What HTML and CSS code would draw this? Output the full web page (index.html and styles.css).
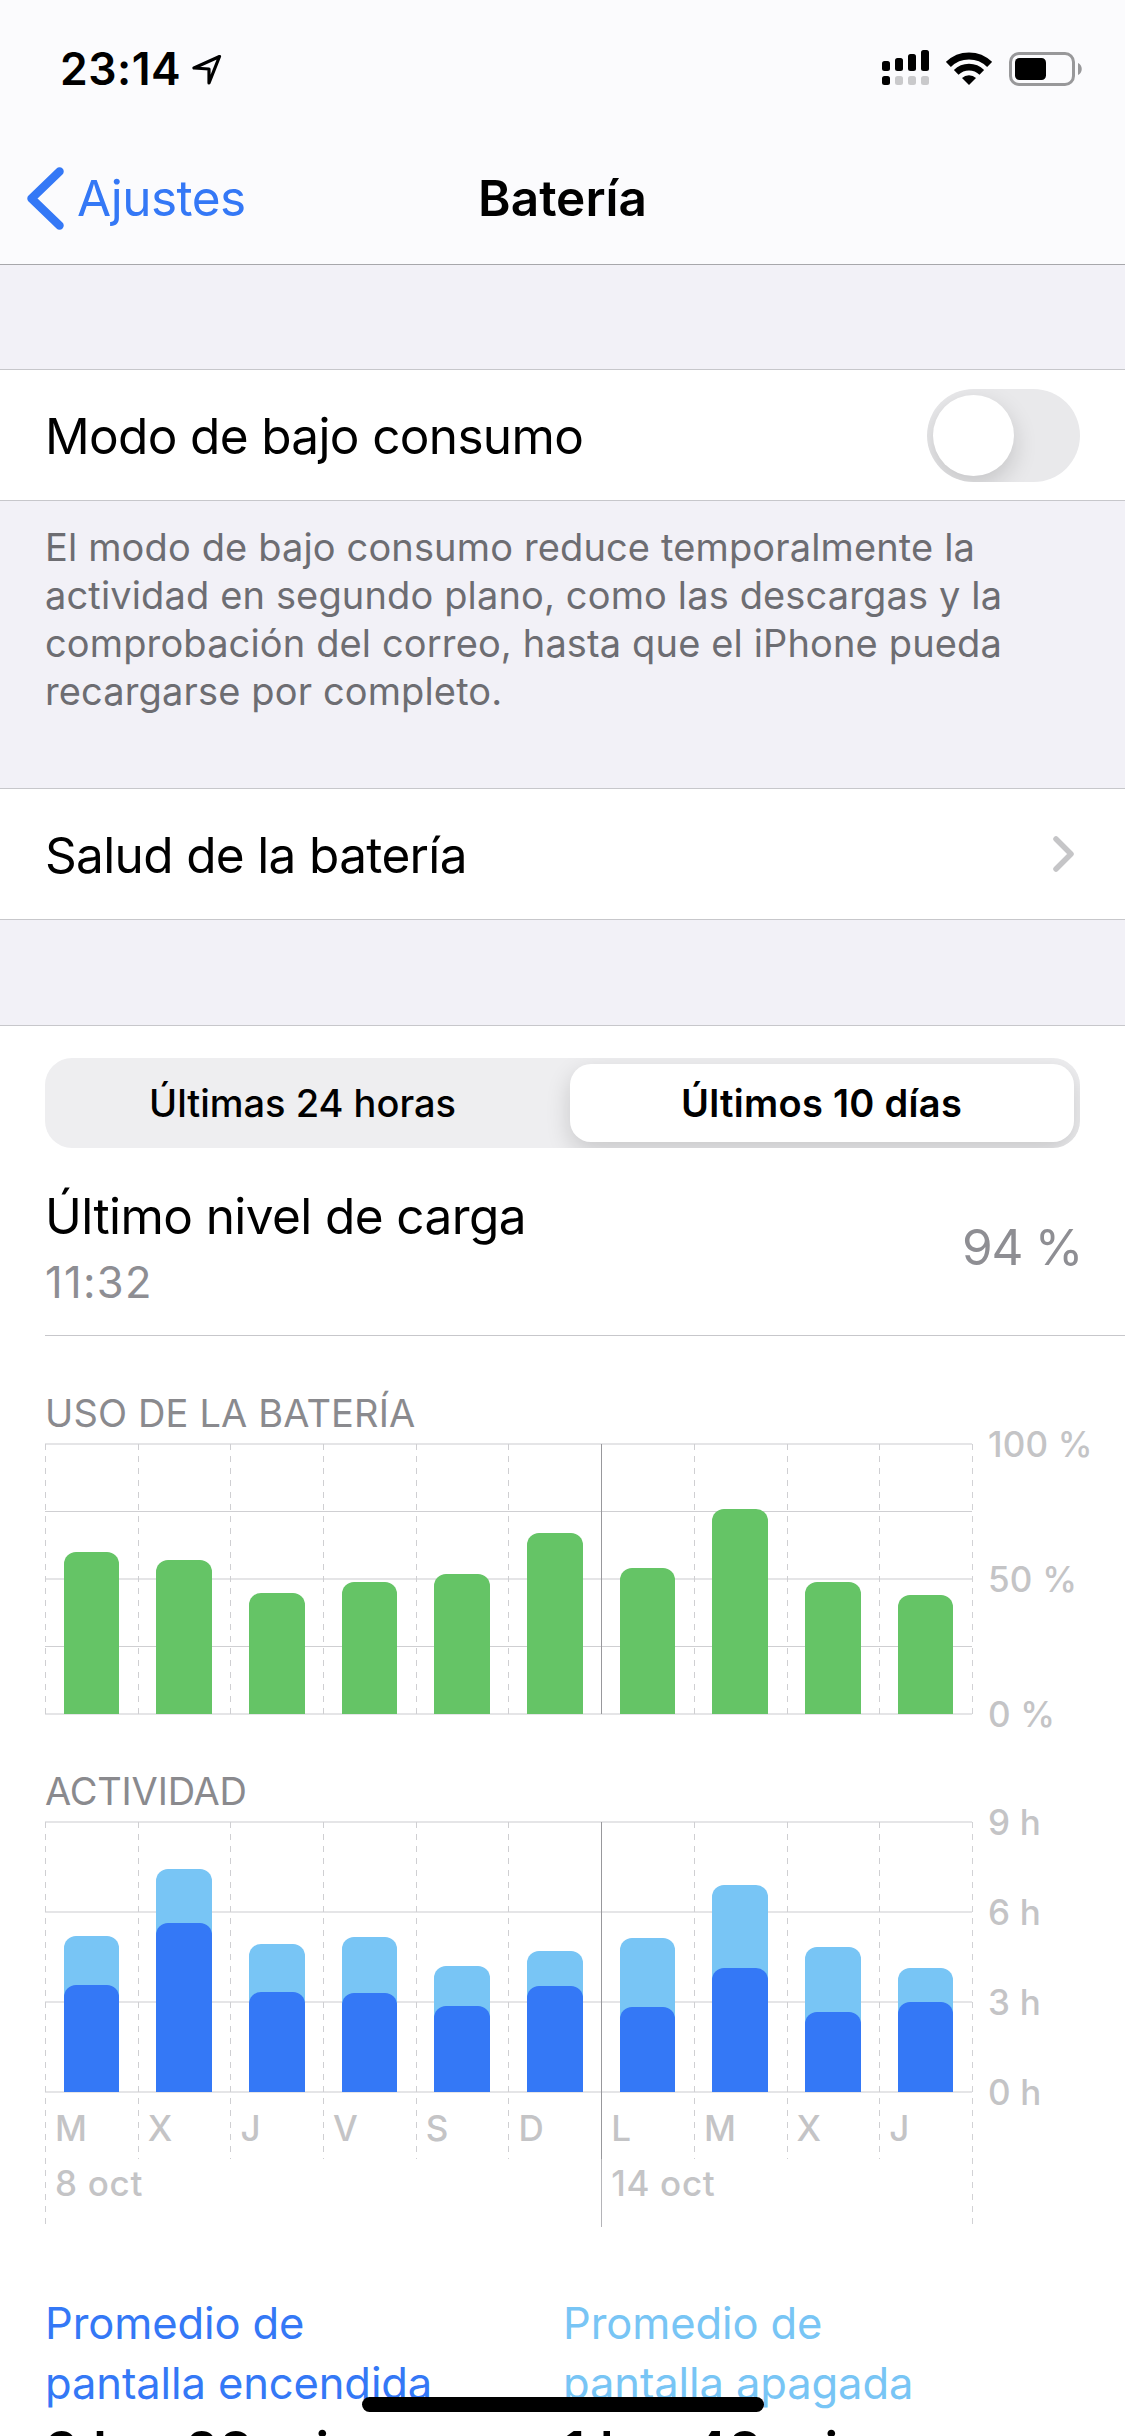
FILE: index.html
```html
<!DOCTYPE html>
<html lang="es">
<head>
    <meta charset="UTF-8">
    <meta name="viewport" content="width=device-width, initial-scale=1.0">
    <title>Batería</title>
    <link rel="stylesheet" href="styles.css">
</head>
<body>

<header class="header">
    <div class="status-bar">
        <div class="status-left">
            <span class="time">23:14</span>
            <svg class="location" width="30" height="31" viewBox="0 0 30 31">
                <path d="M27.5 2.5 L2 14 L17 15 L17 29 Z" fill="none" stroke="#000" stroke-width="3.2" stroke-linejoin="round"/>
            </svg>
        </div>
        <div class="status-right">
            <svg width="47" height="38" viewBox="0 0 47 38">
                <rect x="0" y="11" width="8" height="10" rx="2.5"/>
                <rect x="13" y="8" width="8" height="13" rx="2.5"/>
                <rect x="26" y="4" width="8" height="17" rx="2.5"/>
                <rect x="39" y="0" width="8" height="21" rx="2.5"/>
                <rect x="0" y="26" width="8" height="9" rx="2.5"/>
                <g fill="#c9c9cb">
                    <rect x="13" y="26" width="8" height="9" rx="2.5"/>
                    <rect x="26" y="26" width="8" height="9" rx="2.5"/>
                    <rect x="39" y="26" width="8" height="9" rx="2.5"/>
                </g>
            </svg>
            <svg width="46" height="38" viewBox="0 0 46 38">
                <path d="M2.4 14.4 A29.3 29.3 0 0 1 43.6 14.4" fill="none" stroke="#000" stroke-width="7"/>
                <path d="M10.2 22.4 A18.2 18.2 0 0 1 35.8 22.4" fill="none" stroke="#000" stroke-width="6.6"/>
                <path d="M16 28 A10 10 0 0 1 30 28 L23 35 Z"/>
            </svg>
            <svg width="73" height="38" viewBox="0 0 73 38">
                <rect x="1.5" y="3.5" width="63" height="31" rx="8.5" fill="none" stroke="#98989a" stroke-width="3"/>
                <rect x="6" y="8" width="31" height="22" rx="4.5"/>
                <path d="M69 13 C74 15 74 23 69 25 Z" fill="#98989a"/>
            </svg>
        </div>
    </div>
    <nav class="nav-bar">
        <a class="back">
            <svg width="37" height="63" viewBox="0 0 37 63">
                <path d="M32.5 4.5 L4.5 31.5 L32.5 58.5" fill="none" stroke="#3478f6" stroke-width="8.5" stroke-linecap="round" stroke-linejoin="round"/>
            </svg>
            <span class="back-text">Ajustes</span>
        </a>
        <h1 class="title">Batería</h1>
    </nav>
</header>

<main class="content">
    <section class="cell">
        <span class="cell-text">Modo de bajo consumo</span>
        <span class="toggle"><span class="knob"></span></span>
    </section>
    <p class="footnote">El modo de bajo consumo reduce temporalmente la<br>actividad en segundo plano, como las descargas y la<br>comprobación del correo, hasta que el iPhone pueda<br>recargarse por completo.</p>

    <section class="cell cell-health">
        <span class="cell-text">Salud de la batería</span>
        <svg class="chevron" width="21" height="36" viewBox="0 0 21 36">
            <path d="M3 3 L18 18 L3 33" fill="none" stroke="#c5c5c7" stroke-width="5.5" stroke-linecap="round" stroke-linejoin="round"/>
        </svg>
    </section>

    <section class="usage">
        <div class="segmented">
            <div class="segment">Últimas 24 horas</div>
            <div class="segment selected">Últimos 10 días</div>
        </div>

        <div class="last-charge">
            <div>
                <div class="charge-title">Último nivel de carga</div>
                <div class="charge-time">11:32</div>
            </div>
            <div class="charge-value">94 %</div>
        </div>

        <h2 class="chart-title battery-title">USO DE LA BATERÍA</h2>
        <div class="chart">
            <div class="grid">
                <div class="plot plot-battery">
                    <div class="col"><div class="bar" style="height: 60%"></div></div>
                    <div class="col"><div class="bar" style="height: 57%"></div></div>
                    <div class="col"><div class="bar" style="height: 45%"></div></div>
                    <div class="col"><div class="bar" style="height: 49%"></div></div>
                    <div class="col"><div class="bar" style="height: 52%"></div></div>
                    <div class="col"><div class="bar" style="height: 67%"></div></div>
                    <div class="col week"><div class="bar" style="height: 54%"></div></div>
                    <div class="col"><div class="bar" style="height: 76%"></div></div>
                    <div class="col"><div class="bar" style="height: 49%"></div></div>
                    <div class="col"><div class="bar" style="height: 44%"></div></div>
                </div>
            </div>
            <div class="axis">
                <span>100 %</span>
                <span>50 %</span>
                <span>0 %</span>
            </div>
        </div>

        <h2 class="chart-title activity-title">ACTIVIDAD</h2>
        <div class="chart">
            <div class="grid">
                <div class="plot plot-activity">
                    <div class="col"><div class="bar off" style="height: 57.8%"><div class="bar on" style="height: 68.3%"></div></div></div>
                    <div class="col"><div class="bar off" style="height: 82.6%"><div class="bar on" style="height: 75.6%"></div></div></div>
                    <div class="col"><div class="bar off" style="height: 54.8%"><div class="bar on" style="height: 67.3%"></div></div></div>
                    <div class="col"><div class="bar off" style="height: 57.3%"><div class="bar on" style="height: 64%"></div></div></div>
                    <div class="col"><div class="bar off" style="height: 46.7%"><div class="bar on" style="height: 67.9%"></div></div></div>
                    <div class="col"><div class="bar off" style="height: 52.2%"><div class="bar on" style="height: 75.2%"></div></div></div>
                    <div class="col week"><div class="bar off" style="height: 56.9%"><div class="bar on" style="height: 55.3%"></div></div></div>
                    <div class="col"><div class="bar off" style="height: 76.7%"><div class="bar on" style="height: 59.7%"></div></div></div>
                    <div class="col"><div class="bar off" style="height: 53.6%"><div class="bar on" style="height: 55.6%"></div></div></div>
                    <div class="col"><div class="bar off" style="height: 45.8%"><div class="bar on" style="height: 72.5%"></div></div></div>
                </div>
                <div class="days">
                    <span>M</span>
                    <span>X</span>
                    <span>J</span>
                    <span>V</span>
                    <span>S</span>
                    <span>D</span>
                    <span class="week">L</span>
                    <span>M</span>
                    <span>X</span>
                    <span>J</span>
                </div>
                <div class="dates">
                    <span class="date-first">8 oct</span>
                    <span class="date-second">14 oct</span>
                </div>
            </div>
            <div class="axis">
                <span>9 h</span>
                <span>6 h</span>
                <span>3 h</span>
                <span>0 h</span>
            </div>
        </div>

        <div class="averages">
            <div class="average">
                <div class="average-label screen-on">Promedio de<br>pantalla encendida</div>
                <div class="average-value">3 h y 28 min</div>
            </div>
            <div class="average">
                <div class="average-label screen-off">Promedio de<br>pantalla apagada</div>
                <div class="average-value">1 h y 48 min</div>
            </div>
        </div>
    </section>
</main>

<div class="home-indicator"></div>

</body>
</html>
```
FILE: styles.css
```css
* {
    box-sizing: border-box;
}
body {
    margin: 0;
    width: 1125px;
    height: 2436px;
    overflow: hidden;
    background-color: #f2f1f7;
    font-family: "Inter", "Liberation Sans", sans-serif;
    color: #000;
}
svg {
    display: block;
}
.header {
    height: 265px;
    background-color: #fbfbfd;
    border-bottom: 1px solid #a7a7ab;
}
.status-bar {
    height: 132px;
    padding: 6px 43px 0 60px;
    display: flex;
    justify-content: space-between;
    align-items: center;
}
.status-left {
    display: flex;
    align-items: center;
    gap: 11px;
}
.time {
    font-size: 44.5px;
    font-weight: 600;
    line-height: 60px;
    letter-spacing: 0.5px;
}
.status-right {
    display: flex;
    gap: 17px;
}
.nav-bar {
    height: 132px;
    padding: 0 27px;
    display: grid;
    grid-template-columns: 1fr auto 1fr;
    align-items: center;
}
.back {
    display: flex;
    align-items: center;
    gap: 13px;
    color: #3478f6;
}
.back-text {
    font-size: 49.5px;
    line-height: 60px;
    letter-spacing: -0.5px;
}
.title {
    margin: 0;
    font-size: 49.5px;
    font-weight: 600;
    line-height: 60px;
}
.content {
    padding-top: 104px;
}
.cell {
    height: 132px;
    padding: 0 45px;
    display: flex;
    justify-content: space-between;
    align-items: center;
    background-color: #fff;
    border-top: 1px solid #c7c7cb;
    border-bottom: 1px solid #c7c7cb;
}
.cell-text {
    padding-top: 2px;
    font-size: 49.5px;
    line-height: 60px;
    letter-spacing: -0.65px;
}
.cell-health {
    padding-right: 51px;
    margin-bottom: 105px;
}
.toggle {
    width: 153px;
    height: 93px;
    padding: 6px;
    border-radius: 47px;
    background-color: #e9e9eb;
    overflow: hidden;
}
.knob {
    display: block;
    width: 81px;
    height: 81px;
    border-radius: 50%;
    background-color: #fff;
    box-shadow: 0 9px 24px rgba(0, 0, 0, 0.16);
}
.footnote {
    margin: 0;
    height: 287px;
    padding: 22px 45px 0;
    font-size: 38px;
    line-height: 48px;
    letter-spacing: 0.14px;
    color: #6d6d72;
}
.usage {
    padding: 32px 0 0 45px;
    background-color: #fff;
    border-top: 1px solid #c7c7cb;
}
.segmented {
    width: 1035px;
    height: 90px;
    padding: 6px;
    display: flex;
    border-radius: 27px;
    background-color: #eeeef0;
    overflow: hidden;
}
.segment {
    flex: 1;
    padding-right: 16px;
    font-size: 38px;
    font-weight: 500;
    line-height: 78px;
    text-align: center;
}
.segment.selected {
    flex: 0 0 504px;
    padding-right: 1px;
    font-weight: 600;
    letter-spacing: 0.3px;
    border-radius: 21px;
    background-color: #fff;
    box-shadow: 0 9px 24px rgba(0, 0, 0, 0.16);
}
.last-charge {
    padding: 38px 43px 24px 0;
    display: flex;
    justify-content: space-between;
    align-items: center;
    border-bottom: 1px solid #c7c7cb;
}
.charge-title {
    font-size: 49.5px;
    line-height: 60px;
    letter-spacing: -0.58px;
}
.charge-time {
    margin-top: 8px;
    font-size: 43.5px;
    line-height: 57px;
    letter-spacing: 1.3px;
    color: #8e8e93;
}
.charge-value {
    padding-bottom: 3px;
    font-size: 49.5px;
    line-height: 60px;
    letter-spacing: -1.3px;
    color: #8e8e93;
}
.chart-title {
    margin: 54px 0 8px;
    font-size: 38px;
    font-weight: 400;
    line-height: 46px;
    letter-spacing: 0.15px;
    color: #8a8a8e;
}
.activity-title {
    letter-spacing: -0.2px;
}
.chart {
    display: flex;
    align-items: flex-start;
}
/* the right edge of the grid is drawn here, the left one of each column below */
.grid {
    width: 928px;
    padding-right: 1px;
    background: linear-gradient(#d2d2d5 50%, transparent 50%) right top / 1px 12px repeat-y;
}
.plot, .days, .dates {
    display: grid;
    grid-template-columns: repeat(10, 1fr);
}
.plot {
    height: 272px;
    margin: -1px 0;
    padding: 1px 0;
    background-repeat: no-repeat;
}
.plot-battery {
    background-image:
        linear-gradient(#e5e5e7, #e5e5e7),
        linear-gradient(#cfcfd2, #cfcfd2),
        linear-gradient(#e5e5e7, #e5e5e7),
        linear-gradient(#cfcfd2, #cfcfd2),
        linear-gradient(#e5e5e7, #e5e5e7);
    background-size: 100% 2px, 100% 1px, 100% 2px, 100% 1px, 100% 2px;
    background-position: 0 0, 0 68px, 0 135px, 0 203px, 0 270px;
}
.plot-activity {
    background-image:
        linear-gradient(#e5e5e7, #e5e5e7),
        linear-gradient(#e5e5e7, #e5e5e7),
        linear-gradient(#e5e5e7, #e5e5e7),
        linear-gradient(#e5e5e7, #e5e5e7);
    background-size: 100% 2px;
    background-position: 0 0, 0 90px, 0 180px, 0 270px;
}
.col {
    height: 270px;
    display: flex;
    justify-content: center;
    align-items: flex-end;
}
.col, .days span, .date-first {
    background: linear-gradient(#cfcfd2 50%, transparent 50%) left top / 1px 12px repeat-y;
}
.col.week, .days .week {
    background: linear-gradient(#98989c, #98989c) left top / 1px 100% no-repeat;
}
.bar {
    width: 60%;
    border-radius: 12px 12px 0 0;
    background-color: #65c466;
}
.bar.off {
    display: flex;
    align-items: flex-end;
    background-color: #78c5f5;
}
.bar.on {
    width: 100%;
    background-color: #3478f6;
}
.axis {
    height: 310px;
    margin: -20px 0 -20px 15px;
    display: flex;
    flex-direction: column;
    justify-content: space-between;
    font-size: 35px;
    font-weight: 500;
    line-height: 40px;
    letter-spacing: 0.2px;
    color: #c4c4c6;
}
.days, .dates {
    font-size: 35px;
    font-weight: 500;
    color: #c4c4c6;
}
.days span {
    height: 67px;
    padding: 5px 0 0 10px;
    line-height: 62px;
    background-position: left -6px;
}
.dates span {
    padding-left: 10px;
    line-height: 49px;
    letter-spacing: 0.7px;
}
.date-first {
    height: 65px;
    grid-column: span 6;
    background-position: left -1px;
}
.date-second {
    height: 68px;
    grid-column: span 4;
    background: linear-gradient(#b4b4b8, #b4b4b8) left top / 1px 100% no-repeat;
}
.averages {
    margin-top: 66px;
    display: grid;
    grid-template-columns: 518px 1fr;
}
.average-label {
    font-size: 43.5px;
    line-height: 60px;
    letter-spacing: -0.1px;
}
.screen-on {
    color: #3478f6;
}
.screen-off {
    color: #78c5f5;
}
.average-value {
    font-size: 52px;
    font-weight: 600;
    line-height: 76px;
    letter-spacing: 1px;
}
.home-indicator {
    position: absolute;
    left: 362px;
    top: 2397px;
    width: 402px;
    height: 15px;
    border-radius: 8px;
    background-color: #000;
}
```
